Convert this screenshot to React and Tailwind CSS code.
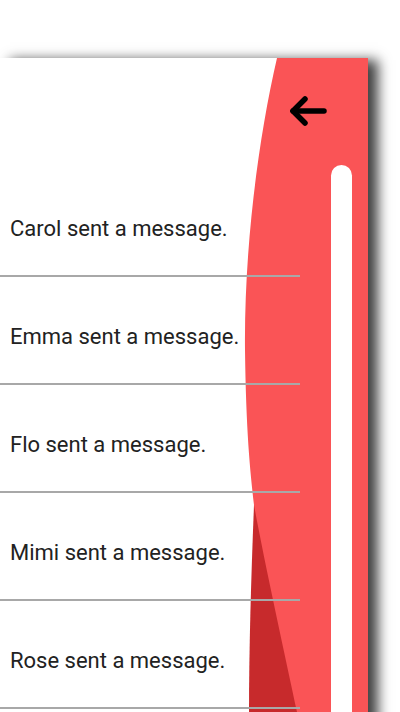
import React from 'react'

const names = ['Carol', 'Emma', 'Flo', 'Mimi', 'Rose']

const BackArrow = () => (
    <svg width="40" height="34" viewBox="0 0 40 34" fill="none" stroke="#000" strokeWidth="5.5" strokeLinecap="round" strokeLinejoin="round">
        <path d="M5 17 L17 5" />
        <path d="M5 17 L17 29" />
        <path d="M6 17 H36" />
    </svg>
)

const Wave = () => (
    <svg className="absolute top-0 left-0" width="368" height="654" viewBox="0 58 368 654">
        <path d="M254 505 C251 580 249 650 249 712 L330 712 L330 505 Z" fill="#C72A2C" />
        <path d="M277 58 C258 140 244 250 245 350 C246 430 250 470 254 505 C264 560 286 660 297 712 L368 712 L368 58 Z" fill="#FA5456" />
    </svg>
)

const App = () => {
    return (
        <div className="w-[400px] h-[712px] bg-white overflow-hidden pt-[58px]" style={{ fontFamily: 'Roboto, "Liberation Sans", sans-serif' }}>
            <div className="relative w-[368px] h-[700px] bg-white shadow-[10px_2px_12px_rgba(0,0,0,0.75)]">
                <Wave />

                <button className="absolute left-[288px] top-[36px]">
                    <BackArrow />
                </button>

                <div className="absolute left-[331px] top-[107px] w-[21px] h-[700px] bg-white rounded-full" />

                <ul className="relative w-[300px] pt-[111px]">
                    {names.map((name) => (
                        <li key={name} className="h-[108px] flex items-center pt-3 pl-[10px] border-b-2 border-[#a8a8a8] text-[22px] text-[#222]">
                            {name} sent a message.
                        </li>
                    ))}
                </ul>
            </div>
        </div>
    )
}

export default App
